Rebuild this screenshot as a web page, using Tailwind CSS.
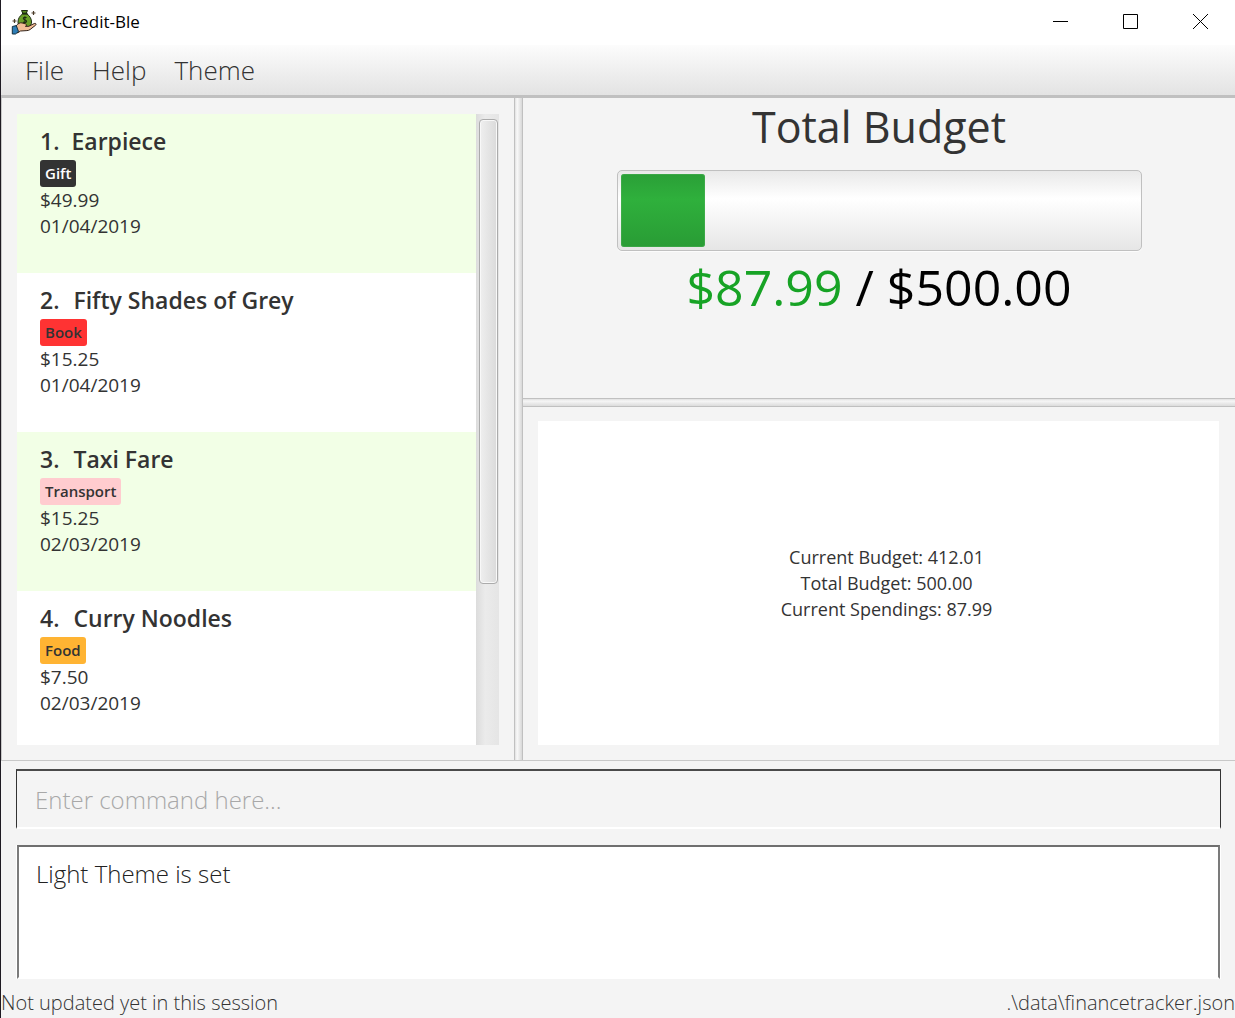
<!DOCTYPE html>
<html lang="en">
<head>
<meta charset="utf-8">
<title>In-Credit-Ble</title>
<script src="https://cdn.jsdelivr.net/npm/@tailwindcss/browser@4"></script>
</head>
<body class="flex h-screen flex-col overflow-hidden border-l border-[#1e1a22] bg-[#f4f4f4] font-['Open_Sans','Noto_Sans',sans-serif] text-[#333]">

  <!-- Title bar -->
  <header class="flex h-[45px] shrink-0 items-center bg-white pb-[2px] pl-[10px]">
    <svg class="size-[26px] shrink-0" viewBox="0 0 26 26" aria-hidden="true">
      <path d="M10.500 1.500h6l-1.300 2.800h-3.400z" fill="#5b8c22" stroke="#1e2b14" stroke-width="1"/>
      <path d="M11.500 5h4.500c3 2 4.500 5 4.500 8 0 2.500-1 4-2.500 4.500H10c-2-.5-3-2-3-4.500 0-3 1.500-6 4.500-8z" fill="#6a9f28" stroke="#1e2b14" stroke-width="1"/>
      <path d="M11 4.600h5.500" stroke="#1e2b14" stroke-width="1.500"/>
      <path d="M15.600 8.700c-.8-.7-3.300-.7-3.300.9 0 1.700 3.300 1 3.300 2.700 0 1.600-2.600 1.600-3.500.7M13.900 7.300v7" fill="none" stroke="#1e2b14" stroke-width="1.100"/>
      <path d="M5 17c2-2.500 4-3.600 6-3.100l3.600 1c1.400.5 1.200 2.400-.2 2.400h3.400l5.500-2.800c1.400-.6 2.300.7 1.300 1.700l-5.500 4.300c-1 .8-2 1-3.200 1.100L9.500 22 6.500 24z" fill="#f2bd96" stroke="#33231a" stroke-width="1"/>
      <path d="M1.300 17.500l4-.9 2.200 5.900-3 2.500H1.300z" fill="#2e7db5" stroke="#14303f" stroke-width="1"/>
      <path d="M3.500 10v4M1.500 12h4M22.500 2v4M20.500 4h4" stroke="#4a3b28" stroke-width="1.200"/>
    </svg>
    <h1 class="ml-1 pt-px text-[17px] leading-6 text-black">In-Credit-Ble</h1>
    <div class="ml-auto flex h-full">
      <button type="button" aria-label="Minimize" class="flex w-[69px] items-center justify-center">
        <svg class="size-[15px]" viewBox="0 0 15 15"><path d="M0 7.500h15" stroke="#000"/></svg>
      </button>
      <button type="button" aria-label="Maximize" class="flex w-[70px] items-center justify-center">
        <svg class="size-[15px]" viewBox="0 0 15 15"><path d="M.5.5h14v14H.5z" fill="none" stroke="#000"/></svg>
      </button>
      <button type="button" aria-label="Close" class="flex w-[70px] items-center justify-center">
        <svg class="size-[15px]" viewBox="0 0 15 15"><path d="M0 0l15 15M15 0L0 15" stroke="#000"/></svg>
      </button>
    </div>
  </header>

  <!-- Menu bar -->
  <nav class="flex h-[53px] shrink-0 items-center border-b-3 border-[#c0c0c0] bg-linear-to-b from-[#fcfcfc] to-[#e3e3e3] pl-[10px] text-[26px] leading-9 font-light">
    <button type="button" class="px-[14px]">File</button>
    <button type="button" class="px-[14px]">Help</button>
    <button type="button" class="px-[14px]">Theme</button>
  </nav>

  <main class="flex min-h-0 flex-1 border-b border-l border-[#c8c8c8]">
    <!-- Spending list -->
    <section class="flex w-[512px] shrink-0 px-[15px] pt-4 pb-[15px]" aria-label="Spendings">
      <ol class="min-w-0 flex-1 overflow-hidden bg-white text-[19px] leading-[26px]">
        <li class="h-[159px] bg-[#f2ffe6] px-[23px] pt-[10px]">
          <h2 class="flex gap-3 text-[23px] leading-[34px] font-semibold"><span>1.</span><span>Earpiece</span></h2>
          <span class="mt-[2px] block h-[27px] w-fit rounded-[3px] bg-[#333] px-[5px] text-[15px] leading-[27px] font-semibold text-white">Gift</span>
          <p>$49.99</p>
          <p>01/04/2019</p>
        </li>
        <li class="h-[159px] bg-white px-[23px] pt-[10px]">
          <h2 class="flex gap-[14px] text-[23px] leading-[34px] font-semibold"><span>2.</span><span>Fifty Shades of Grey</span></h2>
          <span class="mt-[2px] block h-[27px] w-fit rounded-[3px] bg-[#ff3333] px-[5px] text-[15px] leading-[27px] font-semibold">Book</span>
          <p>$15.25</p>
          <p>01/04/2019</p>
        </li>
        <li class="h-[159px] bg-[#f2ffe6] px-[23px] pt-[10px]">
          <h2 class="flex gap-[14px] text-[23px] leading-[34px] font-semibold"><span>3.</span><span>Taxi Fare</span></h2>
          <span class="mt-[2px] block h-[27px] w-fit rounded-[3px] bg-[#ffcccf] px-[5px] text-[15px] leading-[27px] font-semibold">Transport</span>
          <p>$15.25</p>
          <p>02/03/2019</p>
        </li>
        <li class="h-[159px] bg-white px-[23px] pt-[10px]">
          <h2 class="flex gap-[14px] text-[23px] leading-[34px] font-semibold"><span>4.</span><span>Curry Noodles</span></h2>
          <span class="mt-[2px] block h-[27px] w-fit rounded-[3px] bg-[#ffb433] px-[5px] text-[15px] leading-[27px] font-semibold">Food</span>
          <p>$7.50</p>
          <p>02/03/2019</p>
        </li>
      </ol>
      <div class="w-[23px] bg-linear-to-r from-[#dcdcdc] via-[#ebebeb] via-40% to-[#e5e5e5] pt-[5px] pr-px pl-[3px]">
        <div class="h-[465px] rounded-[4px] border border-[#ababab] bg-linear-to-r from-[#efefef] to-[#dadada] shadow-[inset_0_0_0_1px_#f8f8f8]"></div>
      </div>
    </section>

    <div class="w-[9px] shrink-0 border-x border-[#c0c0c0] bg-linear-to-r from-[#e0e0e0] via-[#f9f9f9] via-30% to-[#d8d8d8]"></div>

    <div class="flex min-w-0 flex-1 flex-col">
      <!-- Budget summary -->
      <section class="flex h-[300px] shrink-0 flex-col items-center">
        <h2 class="text-[43px] leading-[58px]">Total Budget</h2>
        <div role="progressbar" aria-label="Budget spent" aria-valuemin="0" aria-valuemax="500" aria-valuenow="87.99" class="mt-[14px] h-[81px] w-[525px] max-w-full rounded-[5px] border border-[#c0c0c0] bg-linear-to-b from-[#e9e9e9] via-white via-35% to-[#e6e6e6] p-[3px] shadow-[0_1px_0_#fcfcfc]">
          <div class="h-full rounded-[3px] bg-linear-to-b from-[#2a9f37] via-[#2fb03c] via-35% to-[#299c35] shadow-[inset_0_0_0_1px_#54b45e66]" style="width:16.300%"></div>
        </div>
        <p class="text-[50px] leading-[72px] text-black"><span class="text-[#17a325]">$87.99</span> / $500.00</p>
      </section>

      <div class="h-[9px] shrink-0 border-y border-[#c0c0c0] bg-linear-to-b from-[#e0e0e0] via-[#f6f6f6] via-30% to-[#dcdcdc]"></div>

      <!-- Details panel -->
      <section class="min-h-0 flex-1 px-[15px] pt-[14px] pb-[15px] pr-4">
        <div class="flex h-full flex-col items-center justify-center bg-white pl-4 text-[18px] leading-[26px]">
          <p>Current Budget: 412.01</p>
          <p>Total Budget: 500.00</p>
          <p>Current Spendings: 87.99</p>
        </div>
      </section>
    </div>
  </main>

  <!-- Command box and result display -->
  <section class="flex shrink-0 flex-col gap-4 px-[15px] pt-2 pr-[14px] text-[24px]">
    <input type="text" aria-label="Command" placeholder="Enter command here..." class="h-[60px] w-full border-x-1 border-t-2 border-b-2 border-x-[#333] border-t-[#4a4a4a] border-b-white bg-[#f4f4f4] px-[18px] font-light placeholder:text-[#a8a8a8]">
    <div class="bg-white px-px">
      <textarea readonly aria-label="Result" class="block h-[134px] w-full resize-none border-2 border-x-[#7b7b7b] border-t-[#6f6f6f] border-b-white bg-white px-[17px] py-[9px] leading-[36px] font-light text-[#222]">Light Theme is set</textarea>
    </div>
  </section>

  <footer class="flex h-[39px] shrink-0 items-center justify-between pt-2 text-[20px] leading-7 font-light">
    <span>Not updated yet in this session</span>
    <span>.\data\financetracker.json</span>
  </footer>
</body>
</html>
